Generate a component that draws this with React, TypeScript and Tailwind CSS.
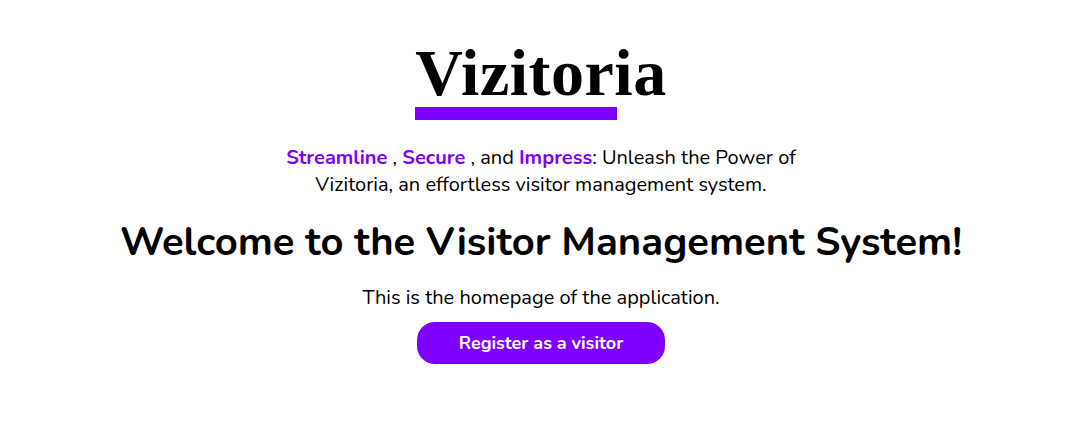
import React from "react";

const App: React.FC = () => {
  return (
    <div className="flex min-h-[445px] w-full flex-col items-center bg-white font-['Nunito','Noto_Sans',sans-serif] text-black">
      <div className="mt-[38px] flex flex-col items-center">
        <h1 className="font-['Liberation_Serif',serif] text-[66px] font-bold leading-[70px] tracking-[0.5px]">
          Vizitoria
        </h1>
        <div className="mt-[-1px] h-[13px] w-[202px] self-start bg-[#8000ff]" />
      </div>
      <p className="mt-[24px] w-[530px] text-center text-[20px] leading-[27px]">
        <span className="font-bold text-[#8000ff]">Streamline</span> ,{" "}
        <span className="font-bold text-[#8000ff]">Secure</span> , and{" "}
        <span className="font-bold text-[#8000ff]">Impress</span>: Unleash the
        Power of Vizitoria, an effortless visitor management system.
      </p>
      <h2 className="mt-[20px] text-[40px] font-bold leading-[48px]">
        Welcome to the Visitor Management System!
      </h2>
      <p className="mt-[20px] text-[20px] leading-[24px]">
        This is the homepage of the application.
      </p>
      <button className="mt-[12px] h-[42px] w-[248px] rounded-[18px] bg-[#8000ff] text-[18px] font-bold text-white">
        Register as a visitor
      </button>
    </div>
  );
};

export default App;
